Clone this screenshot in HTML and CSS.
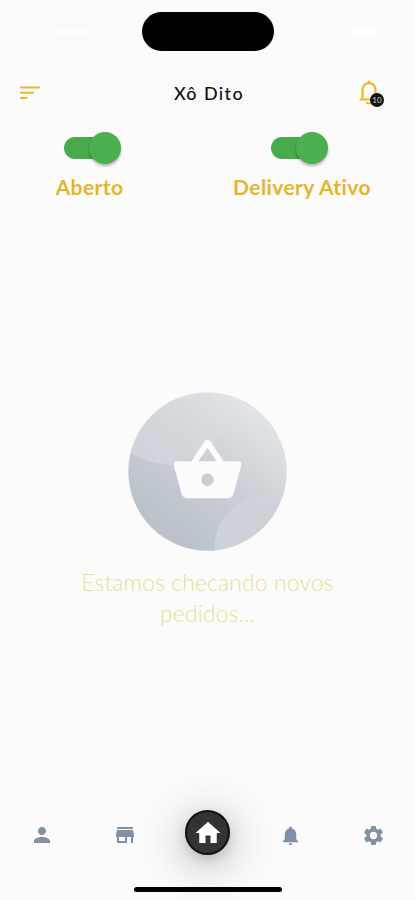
FILE: index.html
```html
<!DOCTYPE html>
<html lang="pt-BR">

<head>
    <meta charset="UTF-8">
    <meta name="viewport" content="width=device-width, initial-scale=1.0">
    <title>Xô Dito</title>
    <link rel="stylesheet" href="styles.css">
</head>

<body>
    <div class="status-bar">
        <span class="signal"></span>
        <div class="island"></div>
        <span class="signal battery"></span>
    </div>

    <header>
        <svg class="menu" viewBox="0 0 20 14">
            <path d="M1 1.5h18M1 6.8h12M1 12h5.5" />
        </svg>
        <h1>Xô Dito</h1>
        <div class="alerts">
            <svg viewBox="0 0 20 26">
                <path d="M1.500 19.500H19M3.500 19.500V10C3.500 6 6.500 3.200 10 3.200S16.500 6 16.500 10V19.500M10 3V1.500M8 22.800c1 .900 3 .900 4 0" />
            </svg>
            <span class="badge">10</span>
        </div>
    </header>

    <section class="switches">
        <div class="option">
            <div class="switch"><span class="thumb"></span></div>
            <p>Aberto</p>
        </div>
        <div class="option">
            <div class="switch"><span class="thumb"></span></div>
            <p>Delivery Ativo</p>
        </div>
    </section>

    <main>
        <svg class="basket" viewBox="0 0 159 159">
            <defs>
                <linearGradient id="disc" x1="0.85" y1="0.1" x2="0.25" y2="0.9">
                    <stop offset="0" stop-color="#e4e6e9" />
                    <stop offset="0.5" stop-color="#cbcfd5" />
                    <stop offset="1" stop-color="#bac1ca" />
                </linearGradient>
                <linearGradient id="shine" x1="0.1" y1="0.9" x2="0.9" y2="0.2">
                    <stop offset="0" stop-color="#fff" stop-opacity="0.22" />
                    <stop offset="1" stop-color="#fff" stop-opacity="0" />
                </linearGradient>
                <clipPath id="round">
                    <circle cx="79.500" cy="79.500" r="79.200" />
                </clipPath>
            </defs>
            <g clip-path="url(#round)">
                <rect width="159" height="159" fill="url(#disc)" />
                <path d="M0 60Q18 71 42 73Q83 65 98 34Q106 18 102 0H0z" fill="url(#shine)" />
                <path d="M86 159Q87 119 126 105Q146 99 159 83V159z" fill="url(#shine)" />
            </g>
            <path transform="translate(42.500 41.500) scale(3.083)" fill="#fcfcfc" d="M17.210 9l-4.380-6.560c-.190-.280-.510-.420-.830-.420-.320 0-.640.140-.830.430L6.790 9H2c-.550 0-1 .450-1 1 0 .090.010.180.040.270l2.540 9.270c.230.840 1 1.460 1.920 1.460h13c.920 0 1.690-.620 1.930-1.460l2.540-9.270L23 10c0-.550-.450-1-1-1h-4.790zM9 9l3-4.400L15 9H9zm3 8c-1.100 0-2-.900-2-2s.900-2 2-2 2 .900 2 2-.900 2-2 2z" />
        </svg>
        <p>Estamos checando novos<br>pedidos...</p>
    </main>

    <nav>
        <a href="#" aria-label="Perfil">
            <svg viewBox="0 0 24 24"><path d="M12 12c2.210 0 4-1.790 4-4s-1.790-4-4-4-4 1.790-4 4 1.790 4 4 4zm0 2c-2.670 0-8 1.340-8 4v2h16v-2c0-2.660-5.330-4-8-4z" /></svg>
        </a>
        <a href="#" aria-label="Loja">
            <svg viewBox="0 0 24 24"><path d="M20 4H4v2h16V4zm1 10v-2l-1-5H4l-1 5v2h1v6h10v-6h4v6h2v-6h1zm-9 4H6v-4h6v4z" /></svg>
        </a>
        <a href="#" class="home" aria-label="Início">
            <svg viewBox="0 0 24 24"><path d="M10 20v-6h4v6h5v-8h3L12 3 2 12h3v8z" /></svg>
        </a>
        <a href="#" class="small" aria-label="Avisos">
            <svg viewBox="0 0 24 24"><path d="M12 22c1.100 0 2-.900 2-2h-4c0 1.100.890 2 2 2zm6-6v-5c0-3.070-1.640-5.640-4.500-6.320V4c0-.830-.670-1.500-1.500-1.500s-1.500.670-1.500 1.500v.680C7.630 5.360 6 7.920 6 11v5l-2 2v1h16v-1l-2-2z" /></svg>
        </a>
        <a href="#" class="small" aria-label="Ajustes">
            <svg viewBox="0 0 24 24"><path d="M19.430 12.980c.040-.320.070-.640.070-.980s-.030-.660-.070-.980l2.110-1.650c.190-.150.240-.420.120-.640l-2-3.460c-.120-.220-.390-.300-.610-.220l-2.490 1c-.520-.400-1.080-.730-1.690-.980l-.380-2.650C14.460 2.180 14.250 2 14 2h-4c-.250 0-.460.180-.490.420l-.380 2.650c-.610.250-1.170.590-1.690.980l-2.490-1c-.230-.090-.490 0-.610.220l-2 3.460c-.130.220-.070.490.120.640l2.110 1.650c-.040.320-.070.650-.070.980s.030.660.070.980l-2.110 1.650c-.190.150-.240.420-.120.640l2 3.460c.120.220.390.300.610.220l2.490-1c.520.400 1.080.730 1.690.980l.380 2.650c.030.240.240.420.490.420h4c.250 0 .460-.180.490-.420l.380-2.650c.610-.250 1.170-.590 1.690-.980l2.490 1c.230.090.490 0 .610-.220l2-3.460c.120-.220.070-.490-.120-.640l-2.110-1.650zM12 15.800a3.800 3.800 0 1 1 0-7.600 3.800 3.800 0 0 1 0 7.600z" /></svg>
        </a>
    </nav>
    <div class="home-bar"></div>
</body>

</html>
```

FILE: styles.css
```css
* {
    padding: 0;
    margin: 0;
    box-sizing: border-box;
}

body {
    display: flex;
    flex-direction: column;
    height: 900px;
    background: #fbfbfb;
    font-family: Lato, "Liberation Sans", sans-serif;
    overflow: hidden;
}

.status-bar {
    display: grid;
    grid-template-columns: 1fr 132px 1fr;
    align-items: center;
    height: 63px;
    padding: 0 36px 0 37px;
}

.island {
    height: 39px;
    border-radius: 20px;
    background: #000;
}

.signal {
    width: 41px;
    height: 10px;
    margin-left: 18px;
    border-radius: 5px;
    background: #fdfdfd;
}

.battery {
    width: 27px;
    margin-left: auto;
    background: #fff;
}

header {
    display: flex;
    justify-content: space-between;
    align-items: center;
    height: 59px;
    padding: 0 30px 0 20px;
}

.menu {
    width: 20px;
    height: 14px;
    fill: none;
    stroke: #e9b72b;
    stroke-width: 2;
    stroke-linecap: round;
}

h1 {
    margin-left: 8px;
    padding-left: 11px;
    font-size: 18px;
    font-weight: 500;
    letter-spacing: 1.4px;
    color: #111;
}

.alerts {
    position: relative;
    width: 26px;
    height: 26px;
}

.alerts svg {
    width: 20px;
    height: 26px;
    fill: none;
    stroke: #edb91e;
    stroke-width: 2.2;
    stroke-linecap: round;
}

.badge {
    position: absolute;
    left: 11px;
    top: 13px;
    width: 14px;
    height: 14px;
    border-radius: 50%;
    background: #111;
    color: #ddd;
    font-size: 8px;
    line-height: 14px;
    text-align: center;
}

.switches {
    display: grid;
    grid-template-columns: 179px 1fr;
    padding-top: 9px;
}

.option {
    display: flex;
    flex-direction: column;
    align-items: center;
}

.option + .option {
    padding-left: 10px;
}

.switch {
    display: flex;
    justify-content: flex-end;
    align-items: center;
    width: 57px;
    height: 33px;
    margin-left: 5px;
}

.option + .option .switch {
    margin-left: -5px;
}

.switch::before {
    content: "";
    flex: none;
    width: 44px;
    height: 22px;
    margin-right: -19px;
    border-radius: 11px;
    background: #49aa4d;
}

.thumb {
    flex: none;
    width: 32px;
    height: 32px;
    border-radius: 50%;
    background: #4caf50;
    box-shadow: 0 2px 3px rgba(0, 0, 0, 0.3);
}

.option p {
    margin-top: 10px;
    font-size: 21px;
    font-weight: bold;
    line-height: 26px;
    letter-spacing: 0.4px;
    color: #e6b52c;
}

main {
    flex: 1;
    padding-top: 192px;
    text-align: center;
}

.basket {
    display: block;
    width: 159px;
    height: 159px;
    margin: 0 auto;
}

main p {
    margin-top: 16px;
    font-size: 23px;
    font-weight: 300;
    line-height: 31px;
    letter-spacing: 0.1px;
    color: #f0dc94;
}

nav {
    display: grid;
    grid-template-columns: repeat(5, 83px);
    align-items: center;
    justify-items: center;
    height: 84px;
}

nav a {
    display: flex;
    align-items: center;
    justify-content: center;
}

nav svg {
    width: 24px;
    height: 24px;
    fill: #8290a3;
}

nav .small svg {
    width: 23px;
    height: 23px;
}

nav .home {
    width: 45px;
    height: 45px;
    margin-bottom: 5px;
    border: 2px solid #111;
    border-radius: 50%;
    background: #333;
    box-shadow: 0 5px 12px rgba(0, 0, 0, 0.15), 0 8px 40px 8px rgba(0, 0, 0, 0.18);
}

nav .home svg {
    width: 30px;
    height: 30px;
    fill: #fff;
    flex: none;
}

.home-bar {
    width: 148px;
    height: 5px;
    margin: 10px auto 8px;
    border-radius: 3px;
    background: #000;
}
```
